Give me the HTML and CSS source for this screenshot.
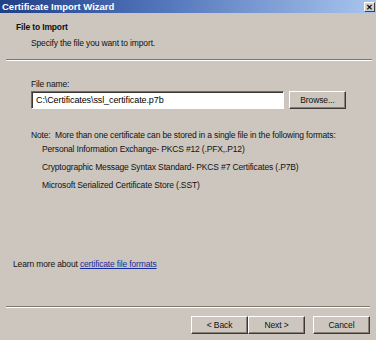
FILE: index.html
```html
<!DOCTYPE html>
<html lang="en">
<head>
    <meta charset="UTF-8">
    <title>Certificate Import Wizard</title>
    <link rel="stylesheet" href="styles.css">
</head>
<body>
    <div class="window">
        <div class="titlebar">
            <span class="title">Certificate Import Wizard</span>
            <span class="close">&#x2715;</span>
        </div>

        <div class="header">
            <div class="header-title">File to Import</div>
            <div class="header-sub">Specify the file you want to import.</div>
        </div>

        <div class="content">
            <label class="field-label">File name:</label>
            <div class="file-row">
                <input class="file-input" type="text" value="C:\Certificates\ssl_certificate.p7b">
                <button class="btn browse">Browse...</button>
            </div>

            <p class="note">Note:&nbsp; More than one certificate can be stored in a single file in the following formats:</p>
            <ul class="formats">
                <li>Personal Information Exchange- PKCS #12 (.PFX,.P12)</li>
                <li>Cryptographic Message Syntax Standard- PKCS #7 Certificates (.P7B)</li>
                <li>Microsoft Serialized Certificate Store (.SST)</li>
            </ul>

            <div class="learn">Learn more about <a href="#">certificate file formats</a></div>
        </div>

        <div class="footer">
            <button class="btn">&lt; Back</button>
            <button class="btn">Next &gt;</button>
            <button class="btn cancel">Cancel</button>
        </div>
    </div>
</body>
</html>
```

FILE: styles.css
```css
body {
    margin: 0;
    font-family: 'Liberation Sans', Arial, sans-serif;
    font-size: 8.5px;
    letter-spacing: -0.15px;
    color: #111;
    background: #ccc6be;
}

.window {
    width: 376px;
    height: 340px;
    display: flex;
    flex-direction: column;
    background: #ccc6be;
    overflow: hidden;
}

.titlebar {
    height: 13px;
    display: flex;
    align-items: center;
    justify-content: space-between;
    padding: 0 1px 0 2px;
    background: linear-gradient(90deg, #1f3f86 0%, #5578bd 45%, #a9c6ee 100%);
}

.title {
    color: #fff;
    font-weight: bold;
    font-size: 9.5px;
    letter-spacing: 0;
}

.close {
    width: 11px;
    height: 10px;
    font-size: 8px;
    line-height: 10px;
    text-align: center;
    font-weight: bold;
    color: #000;
    background: #d4d0c8;
    border: 1px solid;
    border-color: #fff #404040 #404040 #fff;
    box-sizing: border-box;
}

.header {
    height: 47px;
    padding: 9px 0 0 10px;
    box-sizing: border-box;
    border-bottom: 1px solid #7d7871;
    box-shadow: 0 1px 0 #fff;
    margin: 0 4px 0 6px;
}

.header-title {
    font-weight: bold;
}

.header-sub {
    margin-top: 6px;
    padding-left: 15px;
}

.content {
    flex: 1;
    padding: 19px 12px 0 13px;
    display: flex;
    flex-direction: column;
}

.field-label {
    display: block;
    padding-left: 18px;
    margin-bottom: 2px;
}

.file-row {
    display: flex;
    align-items: center;
    gap: 5px;
    padding-left: 18px;
}

.file-input {
    width: 253px;
    height: 18px;
    box-sizing: border-box;
    font-family: inherit;
    font-size: 9px;
    letter-spacing: -0.1px;
    padding: 0 4px;
    background: #fff;
    border: 1px solid;
    border-color: #6f6a64 #fff #fff #6f6a64;
    box-shadow: inset 1px 1px 0 #3c3935;
    outline: none;
}

.btn {
    font-family: inherit;
    font-size: 8.5px;
    letter-spacing: -0.1px;
    color: #111;
    height: 18px;
    background: #ccc6be;
    border: 1px solid;
    border-color: #fff #3c3935 #3c3935 #fff;
    box-shadow: inset -1px -1px 0 #857f78;
    padding: 0;
}

.browse {
    width: 57px;
}

.note {
    margin: 21px 0 0 18px;
}

.formats {
    list-style: none;
    margin: 4px 0 0;
    padding-left: 29px;
}

.formats li {
    height: 18px;
}

.learn {
    margin-top: auto;
    margin-bottom: 37px;
}

.learn a {
    color: #1a2d9c;
    text-decoration: underline;
}

.footer {
    height: 34px;
    margin: 0 6px;
    border-top: 1px solid #7d7871;
    box-shadow: inset 0 1px 0 #fff;
    display: flex;
    justify-content: flex-end;
    align-items: center;
    padding-top: 2px;
    box-sizing: border-box;
}

.footer .btn {
    width: 57px;
}

.footer .cancel {
    margin-left: 8px;
}
```
